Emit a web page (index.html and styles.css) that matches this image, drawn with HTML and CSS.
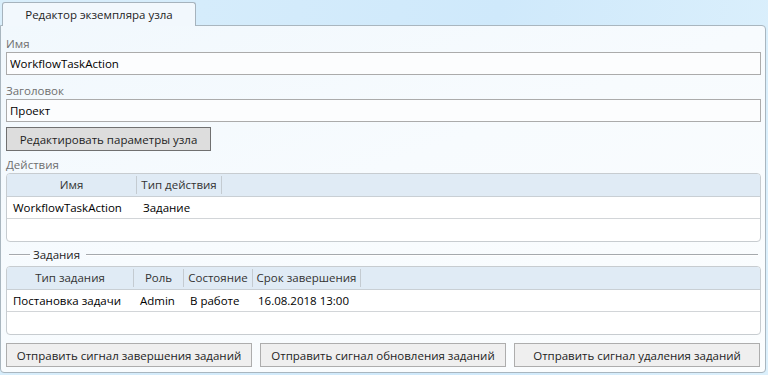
FILE: index.html
```html
<!DOCTYPE html>
<html lang="ru">
<head>
    <meta charset="UTF-8">
    <title>Редактор экземпляра узла</title>
    <link rel="stylesheet" href="styles.css">
</head>
<body>
<div class="tabs">
    <div class="tab">Редактор экземпляра узла</div>
</div>
<div class="panel">
    <label class="field-label">Имя</label>
    <input class="field" type="text" value="WorkflowTaskAction">
    <label class="field-label">Заголовок</label>
    <input class="field" type="text" value="Проект">
    <button class="btn btn-edit">Редактировать параметры узла</button>

    <div class="section-label">Действия</div>
    <div class="grid">
        <div class="grid-row grid-head">
            <div class="cell" style="width:130px">Имя</div>
            <div class="cell" style="width:85px">Тип действия</div>
        </div>
        <div class="grid-row">
            <div class="cell" style="width:130px">WorkflowTaskAction</div>
            <div class="cell" style="width:85px">Задание</div>
        </div>
        <div class="grid-empty"></div>
    </div>

    <div class="group-title"><span>Задания</span></div>
    <div class="grid">
        <div class="grid-row grid-head">
            <div class="cell" style="width:127px">Тип задания</div>
            <div class="cell" style="width:50px">Роль</div>
            <div class="cell" style="width:69px">Состояние</div>
            <div class="cell" style="width:108px">Срок завершения</div>
        </div>
        <div class="grid-row">
            <div class="cell" style="width:127px">Постановка задачи</div>
            <div class="cell" style="width:50px">Admin</div>
            <div class="cell" style="width:69px">В работе</div>
            <div class="cell date" style="width:108px">16.08.2018 13:00</div>
        </div>
        <div class="grid-empty"></div>
    </div>

    <div class="actions">
        <button class="btn">Отправить сигнал завершения заданий</button>
        <button class="btn">Отправить сигнал обновления заданий</button>
        <button class="btn">Отправить сигнал удаления заданий</button>
    </div>
</div>
</body>
</html>
```

FILE: styles.css
```css
*{
    margin:0;
    padding:0;
    box-sizing: border-box;
}
body{
    width: 768px;
    height: 375px;
    overflow: hidden;
    font-family: "Open Sans", "Noto Sans", sans-serif;
    font-size: 11.5px;
    color: #1e1e1e;
    background: linear-gradient(100deg, #d9eefb 0%, #cfe9fb 60%, #dcf0fc 100%);
}
.tabs{
    display: flex;
    padding: 2px 0 0 2px;
}
.tab{
    width: 194px;
    height: 24px;
    margin-bottom: -1px;
    position: relative;
    z-index: 1;
    border: 1px solid #a6b3bd;
    border-bottom: none;
    border-radius: 3px 3px 0 0;
    background: #f2f8fd;
    text-align: center;
    line-height: 24px;
    color: #1e1e1e;
}
.panel{
    display: flex;
    flex-direction: column;
    margin-right: 2px;
    height: 348px;
    padding: 2px 4px 0 5px;
    border: 1px solid #a9b6bf;
    border-radius: 0 4px 4px 4px;
    background: linear-gradient(160deg, #f1f8fd 0%, #f7fbfe 45%, #fbfdfe 100%);
}
.field-label{
    display: block;
    height: 24px;
    padding-top: 8px;
    line-height: 16px;
    color: #6f6f6f;
}
.field{
    height: 23px;
    width: 100%;
    padding: 0 3px;
    border: 1px solid #ababab;
    background: #fcfdfe;
    font: inherit;
    color: #000;
    outline: none;
}
.btn{
    height: 24px;
    border: 1px solid #adadad;
    background: #efefef;
    font: inherit;
    color: #1e1e1e;
}
.btn-edit{
    align-self: flex-start;
    width: 205px;
    margin-top: 5px;
    border-color: #707070;
    background: #dddddd;
}
.section-label{
    height: 22px;
    padding-top: 6px;
    line-height: 16px;
    color: #6f6f6f;
}
.grid{
    height: 69px;
    border: 1px solid #c7ccd0;
    border-radius: 4px;
    background: #fff;
    overflow: hidden;
}
.grid-row{
    display: flex;
    height: 22px;
    border-bottom: 1px solid #d2d5d8;
    line-height: 21px;
    color: #000;
}
.grid-head{
    height: 23px;
    background: #e0ebf5;
    border-bottom-color: #c9cfd4;
    line-height: 22px;
    color: #333;
}
.grid-head .cell{
    text-align: center;
    padding: 0;
    border-right: 1px solid #c4cbd1;
    height: 18px;
    margin-top: 2px;
    line-height: 18px;
}
.cell{
    flex: none;
    padding-left: 6px;
    white-space: nowrap;
}
.cell.date{
    padding-left: 5px;
}
.grid-empty{
    flex: 1;
}
.group-title{
    display: flex;
    align-items: center;
    height: 23px;
    margin: 1px 3px 0 3px;
    line-height: 16px;
    color: #1e1e1e;
}
.group-title::before,
.group-title::after{
    content: "";
    height: 1px;
    background: #a5a9ad;
    box-shadow: 0 1px 0 #fff;
}
.group-title::before{
    width: 21px;
}
.group-title::after{
    flex: 1;
}
.group-title span{
    padding: 0 6px 0 3px;
}
.actions{
    display: flex;
    gap: 8px;
    margin-top: 8px;
    margin-right: 1px;
}
.actions .btn{
    flex: 1;
}
```
